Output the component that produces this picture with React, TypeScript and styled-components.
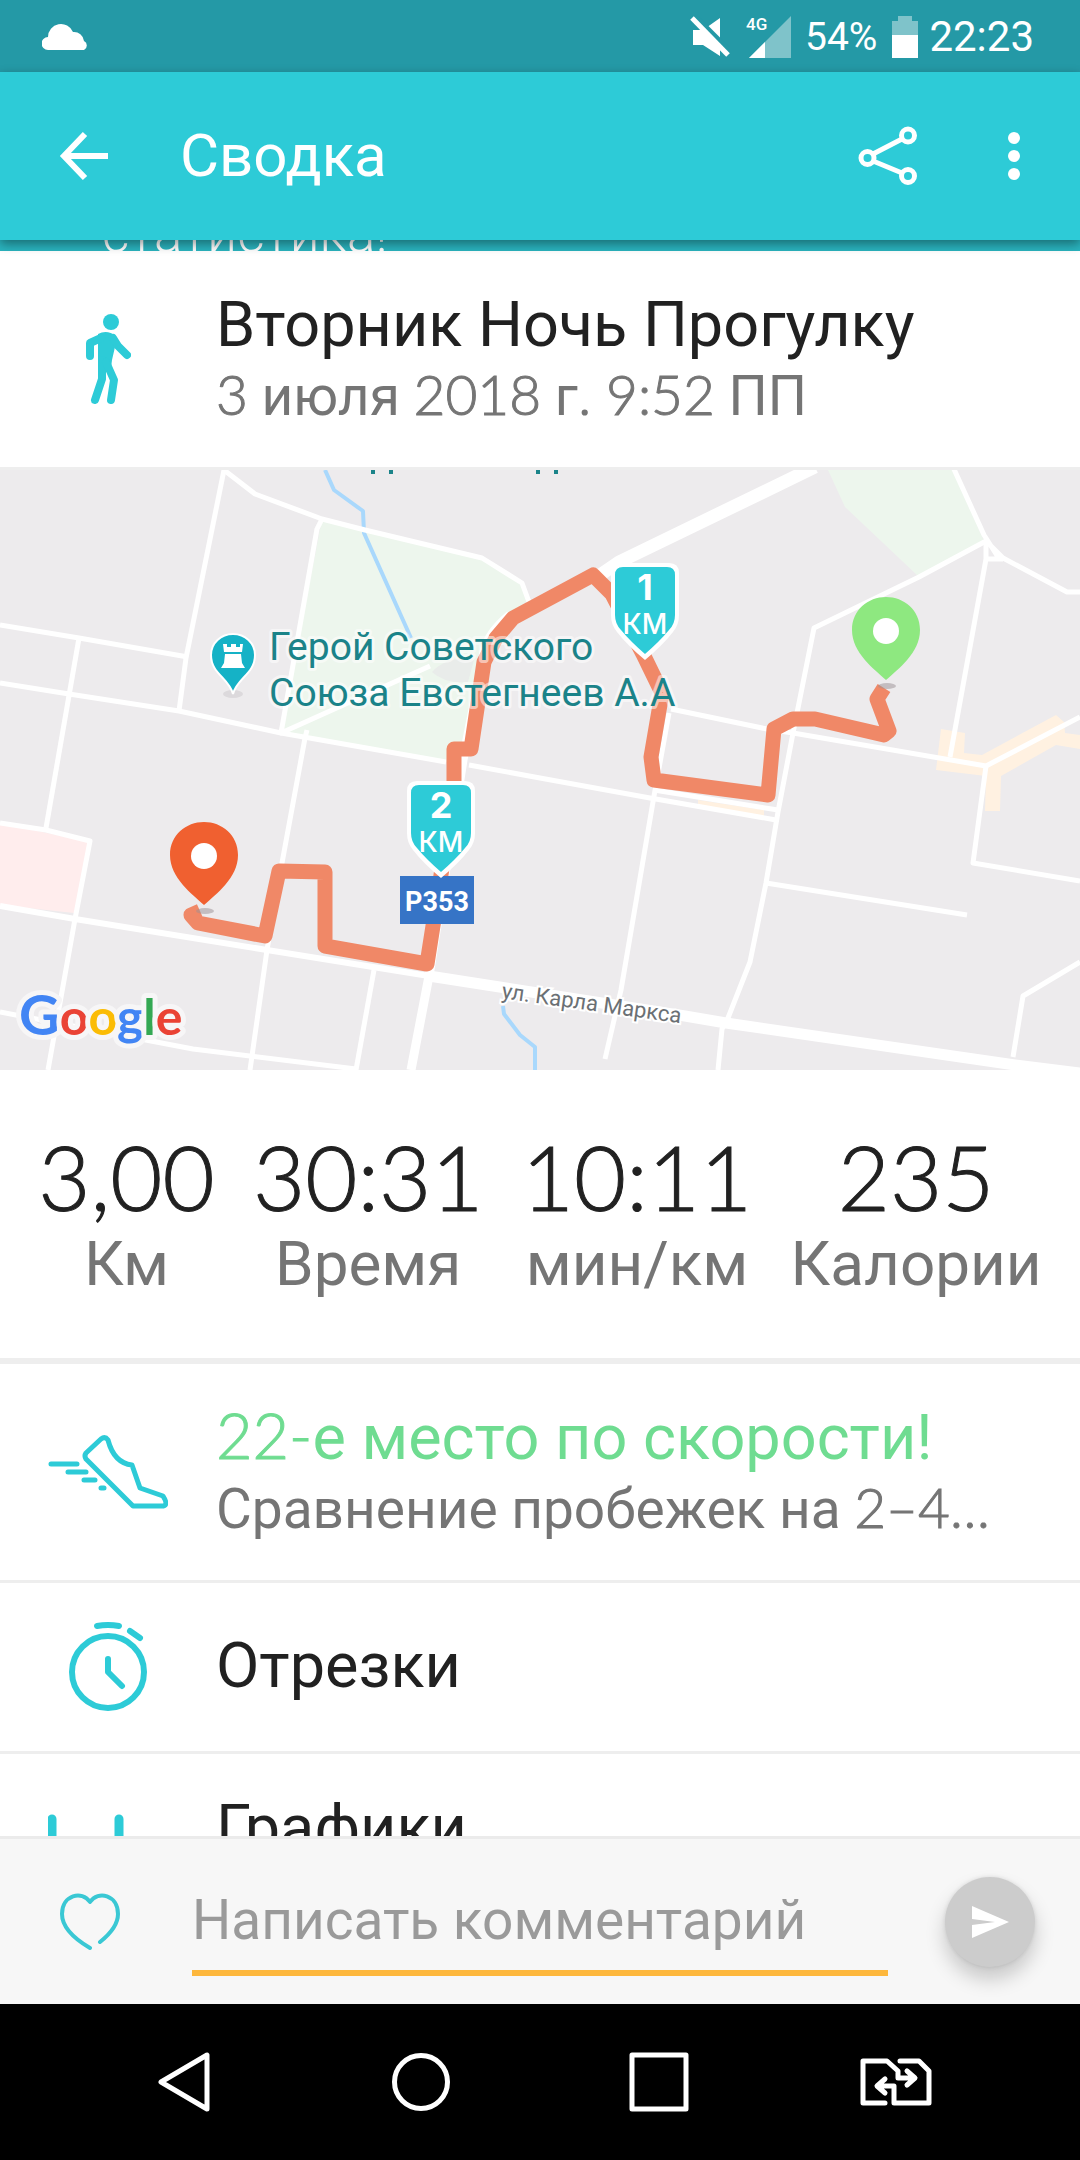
import React from "react";
import styled, { createGlobalStyle } from "styled-components";

const color = {
  statusBar: "#2499a6",
  primary: "#2dcbd7",
  banner: "#2ab4bf",
  ink: "#212121",
  muted: "#757575",
  hint: "#9a9a9a",
  line: "#eeeeee",
  success: "#6fdc91",
  accent: "#fdb73c",
  bar: "#f7f7f7",
};

const Global = createGlobalStyle`
  html, body, #root { height: 100%; }
  body { margin: 0; background: #fff; font-family: Roboto, "Noto Sans", sans-serif; color: ${color.ink}; }
  *, *::before, *::after { box-sizing: border-box; }
  button { appearance: none; border: 0; padding: 0; background: none; font: inherit; color: inherit; cursor: pointer; }
  h1, h2, p, dl, dt, dd, ul { margin: 0; padding: 0; font-weight: 400; }
  svg { display: block; }
`;

const Screen = styled.div`
  display: flex;
  flex-direction: column;
  height: 100vh;
  overflow: hidden;
`;

const StatusBar = styled.div`
  flex: none;
  display: flex;
  align-items: center;
  height: 72px;
  padding: 2px 46px 0 42px;
  background: ${color.statusBar};
  color: #fff;
`;

const StatusGroup = styled.div`
  display: flex;
  align-items: center;
  margin-left: auto;
`;

const StatusText = styled.span<{ $size: number }>`
  font-size: ${(p) => p.$size}px;
  line-height: 48px;
  white-space: nowrap;
`;

const StatusIcon = styled.span<{ $gap: number }>`
  margin-right: ${(p) => p.$gap}px;
`;

const Toolbar = styled.header`
  flex: none;
  position: relative;
  z-index: 1;
  display: flex;
  align-items: center;
  height: 168px;
  padding: 0 18px 0 48px;
  background: ${color.primary};
  color: #fff;
  box-shadow: 0 4px 10px rgba(0, 0, 0, 0.4);
`;

const ToolbarTitle = styled.h1`
  flex: 1;
  margin-left: 60px;
  font-size: 60px;
  line-height: 72px;
`;

const ToolbarActions = styled.div`
  display: flex;
  gap: 30px;
`;

const IconButton = styled.button<{ $width: number }>`
  display: grid;
  place-items: center;
  width: ${(p) => p.$width}px;
  height: 96px;
`;

const Content = styled.main`
  flex: 1;
  min-height: 0;
  overflow: hidden;
`;

const Banner = styled.div`
  display: flex;
  align-items: flex-end;
  height: 11px;
  padding-left: 102px;
  overflow: hidden;
  background: ${color.banner};
  color: #fff;
`;

const BannerText = styled.p`
  font-size: 53px;
  font-weight: 300;
  line-height: 34px;
`;

const Row = styled.section<{ $height: number }>`
  display: flex;
  align-items: center;
  min-height: ${(p) => p.$height}px;
`;

const RowButton = styled.button<{ $height: number }>`
  display: flex;
  align-items: center;
  width: 100%;
  min-height: ${(p) => p.$height}px;
  text-align: left;
  border-bottom: 3px solid ${color.line};
`;

const RowIcon = styled.span`
  flex: none;
  display: grid;
  place-items: center;
  width: 216px;
`;

const RowText = styled.span`
  display: block;
  flex: 1;
  min-width: 0;
  padding-bottom: 2px;
`;

const RowTitle = styled.span<{ $tone?: string }>`
  display: block;
  font-size: 63px;
  line-height: 76px;
  color: ${(p) => p.$tone ?? color.ink};
`;

const RowSubtitle = styled.span`
  display: block;
  font-size: 55px;
  line-height: 66px;
  color: ${color.muted};
  white-space: nowrap;
`;

const Digits = styled.span`
  font-family: Lato, Roboto, sans-serif;
  font-weight: 300;
  line-height: 1;
  -webkit-text-stroke: 1px currentColor;
`;

const MapFrame = styled.section`
  border-top: 3px solid ${color.line};
  overflow: hidden;
  svg { width: 100%; height: auto; }
`;

const Stats = styled.dl`
  display: flex;
  justify-content: space-evenly;
  height: 294px;
  padding-top: 54px;
  border-bottom: 6px solid ${color.line};
`;

const Stat = styled.div`
  display: flex;
  flex-direction: column-reverse;
  justify-content: flex-end;
  align-items: center;
`;

const StatValue = styled.dd`
  font-family: Lato, Roboto, sans-serif;
  font-size: 90px;
  font-weight: 300;
  line-height: 104px;
  -webkit-text-stroke: 1px currentColor;
`;

const StatLabel = styled.dt`
  font-size: 62px;
  line-height: 72px;
  color: ${color.muted};
`;

const CommentBar = styled.form`
  flex: none;
  display: flex;
  align-items: center;
  height: 168px;
  padding: 0 45px 0 42px;
  background: ${color.bar};
  border-top: 3px solid #ebebeb;
`;

const CommentInput = styled.input`
  flex: 1;
  min-width: 0;
  height: 109px;
  margin: 0 57px 0 54px;
  padding: 3px 0 0;
  border: 0;
  border-bottom: 6px solid ${color.accent};
  border-radius: 0;
  outline: 0;
  background: none;
  font: 400 55px/66px Roboto, sans-serif;
  color: ${color.ink};
  &::placeholder { color: ${color.hint}; opacity: 1; }
`;

const SendButton = styled.button`
  display: grid;
  place-items: center;
  width: 90px;
  height: 90px;
  border-radius: 50%;
  background: #cccccc;
  box-shadow: 0 12px 20px rgba(0, 0, 0, 0.2), 0 0 4px rgba(0, 0, 0, 0.1);
`;

const NavBar = styled.nav`
  flex: none;
  display: grid;
  grid-template-columns: repeat(4, 1fr);
  justify-items: center;
  align-items: center;
  height: 156px;
  padding: 0 65px;
  background: #000;
`;

const KmMarker = ({ x, y, n }: { x: number; y: number; n: string }) => (
  <g transform={`translate(${x} ${y})`} textAnchor="middle" fill="#fff">
    <path
      d="M-24 0H24Q34 0 34 10V52Q34 62 28 69Q18 82 0 97Q-18 82 -28 69Q-34 62 -34 52V10Q-34 0 -24 0Z"
    />
    <path
      d="M-22 4H22Q30 4 30 12V52Q30 61 24 67Q15 78 0 91Q-15 78 -24 67Q-30 61 -30 52V12Q-30 4 -22 4Z"
      fill={color.primary}
    />
    <text y="37" fontFamily="Inter, sans-serif" fontSize="36" fontWeight="700">{n}</text>
    <text y="71" fontFamily="Inter, sans-serif" fontSize="28" fontWeight="500">КМ</text>
  </g>
);

const PlacePin = ({ x, y, fill }: { x: number; y: number; fill: string }) => (
  <g transform={`translate(${x} ${y})`}>
    <ellipse cx="1" cy="6" rx="9" ry="3" fill="#9a8f93" opacity="0.5" />
    <path d="M0 0C-12-11-34-27-34-50C-34-70-18-83 0-83S34-70 34-50C34-27 12-11 0 0Z" fill={fill} />
    <circle cy="-49" r="13" fill="#fff" />
  </g>
);

const RouteMap = () => (
  <svg viewBox="0 470 1080 600" role="img" aria-label="Маршрут прогулки">
    <rect y="470" width="1080" height="600" fill="#edebed" />
    <g fill="#edf6ed">
      <path d="M322 519L365 531L482 558L522 583L529 600L496 622L479 658L461 762L446 762L281 733Z" />
      <path d="M828 470L845 507L919 577L984 541L953 470Z" />
    </g>
    <path d="M0 823L89 842L74 913L0 905Z" fill="#ffeded" />
    <path d="M432 672Q448 655 474 660L468 682Q445 684 432 672Z" fill="#e9ecea" />
    <g fill="#fff1e1">
      <path d="M941 729L965 733L964 753L982 755L1056 715L1064 722L1065 733L1080 735V749L1056 745L1001 776L1000 811H985L986 776L936 770Z" />
      <path d="M698 800L764 810V817L698 807Z" />
    </g>
    <g fill="none" stroke="#a9d8fc" strokeWidth="4" strokeLinejoin="round">
      <path d="M325 470L334 490L363 511L364 533L411 638" />
      <path d="M503 1006L504 1014L520 1035L535 1047V1070" />
    </g>
    <g fill="none" stroke="#fff" strokeWidth="5" strokeLinejoin="round">
      <path d="M224 470L186 658L179 711" />
      <path d="M224 470L255 494L322 519L365 530L482 558L522 583L529 602" />
      <path d="M322 519L317 529L281 733L430 666" />
      <path d="M0 625L79 638L188 657" />
      <path d="M79 638L46 828" />
      <path d="M0 683L69 694L179 711L281 733L446 762M469 765L540 778L650 798L776 820" />
      <path d="M307 730L305 738L282 863L267 950L250 1070" />
      <path d="M0 823L46 830L90 841L75 919L48 1070" />
      <path d="M374 970L356 1070" />
      <path d="M0 1012L151 1041L193 1049L356 1069" />
      <path d="M953 467L984 535L998 557M986 541L1003 558L1067 592H1080M986 559H1003" />
      <path d="M986 541L919 577L814 628L797 713L793 733L778 812L766 883L750 962L728 1018L722 1029L718 1070" />
      <path d="M986 541V559L950 757" />
      <path d="M671 709L767 729L793 733L986 766L1080 717" />
      <path d="M986 766L973 863L1080 881" />
      <path d="M766 883L967 915" />
      <path d="M669 713L654 796L621 990L605 1059" />
      <path d="M654 790L778 810" />
      <path d="M1080 962L1023 996L1013 1057" />
    </g>
    <g fill="none" stroke="#fff" strokeLinejoin="round">
      <path d="M0 906L75 919L267 950L429 976" strokeWidth="6" />
      <path d="M510 615Q485 635 483 658L463 760L429 976L411 1070" strokeWidth="9" />
      <path d="M429 976L685 1016L726 1023L1015 1065L1080 1073" strokeWidth="11" />
      <path d="M815 467L619 562L600 575" strokeWidth="13" />
    </g>
    <path
      d="M884 688L877 699L889 731L884 735L815 719H793L774 729L768 795L654 780L651 757L662 693L643 654L612 594L593 575L513 618L496 638L484 662L471 749H454V788L441 875L427 964L325 946V872L279 871L265 936L198 923L191 915L200 911"
      fill="none"
      stroke="#f08867"
      strokeWidth="15"
      strokeLinejoin="round"
    />
    <g fill="#1b8389">
      <rect x="371" y="470" width="4" height="4" />
      <rect x="389" y="470" width="4" height="4" />
      <rect x="536" y="470" width="4" height="4" />
      <rect x="554" y="470" width="4" height="4" />
    </g>
    <ellipse cx="233" cy="694" rx="10" ry="4" fill="#dcd9dc" />
    <path d="M233 694C229 678 211 674 211 655C211 643 221 634 233 634S255 643 255 655C255 674 237 678 233 694Z" fill="#15b2c6" stroke="#fff" strokeWidth="2" />
    <path d="M223 644h4v3h4v-3h5v3h4v-3h3l-1 8h-18ZM225 654h16l1 9 3 5h-24l3-5Z" fill="#fff" />
    <g fontFamily="Roboto, sans-serif" fontSize="39" fill="#1b8389" stroke="#fff" strokeOpacity="0.5" strokeWidth="6" paintOrder="stroke" strokeLinejoin="round">
      <text x="269" y="660">Герой Советского</text>
      <text x="269" y="706">Союза Евстегнеев А.А</text>
    </g>
    <text
      transform="translate(501 998) rotate(8)"
      fontFamily="Roboto, sans-serif"
      fontSize="22"
      fill="#6b7074"
      stroke="#fff"
      strokeWidth="4"
      paintOrder="stroke"
    >
      ул. Карла Маркса
    </text>
    <rect x="400" y="876" width="74" height="48" fill="#3674c6" />
    <text x="437" y="911" textAnchor="middle" fontFamily="Roboto, sans-serif" fontSize="27" fontWeight="700" fill="#fff">P353</text>
    <KmMarker x={645} y={563} n="1" />
    <KmMarker x={441} y={781} n="2" />
    <PlacePin x={886} y={680} fill="#8ee880" />
    <PlacePin x={204} y={905} fill="#f06030" />
    <text x="19" y="1035" fontFamily="Lato, sans-serif" fontSize="50" fontWeight="700" stroke="#f7f6f7" strokeWidth="10" paintOrder="stroke" strokeLinejoin="round">
      <tspan fill="#4285f4" fontSize="56">G</tspan>
      <tspan fill="#ea4335">o</tspan>
      <tspan fill="#fbbc05">o</tspan>
      <tspan fill="#4285f4">g</tspan>
      <tspan fill="#34a853">l</tspan>
      <tspan fill="#ea4335">e</tspan>
    </text>
  </svg>
);

const stats = [
  { value: "3,00", label: "Км" },
  { value: "30:31", label: "Время" },
  { value: "10:11", label: "мин/км" },
  { value: "235", label: "Калории" },
];

export default function App() {
  return (
    <Screen>
      <Global />
      <StatusBar>
        <svg width="50" height="28" viewBox="0 0 50 28" fill="#fff">
          <path d="M6 27a6 6 0 0 1 0-13A13 13 0 0 1 31 9a10 10 0 0 1 11 9a5 5 0 0 1 0 9Z" />
        </svg>
        <StatusGroup>
          <StatusIcon $gap={16}>
            <svg width="40" height="42" viewBox="0 0 40 42">
              <path d="M3 14H13L30 2V40L13 29H3Z" fill="#fff" />
              <path d="M5 0L42 37" stroke={color.statusBar} strokeWidth="5" />
              <path d="M2 2L38 39" stroke="#fff" strokeWidth="5" />
            </svg>
          </StatusIcon>
          <StatusIcon $gap={13}>
            <svg width="46" height="44" viewBox="0 0 46 44">
              <path d="M45 1V43H3Z" fill="#7fc3ca" />
              <path d="M19 27V43H3Z" fill="#fff" />
              <text x="0" y="15" fontFamily="Roboto, sans-serif" fontSize="17" fontWeight="500" fill="#fff">4G</text>
            </svg>
          </StatusIcon>
          <StatusText $size={39}>54%</StatusText>
          <svg width="52" height="44" viewBox="0 0 52 44">
            <path d="M15 6H21V1H35V6H41V43H15Z" fill="#7fc3ca" />
            <path d="M15 20H41V43H15Z" fill="#fff" />
          </svg>
          <StatusText $size={42}>22:23</StatusText>
        </StatusGroup>
      </StatusBar>
      <Toolbar>
        <IconButton $width={72} type="button" aria-label="Назад">
          <svg width="50" height="50" viewBox="0 0 50 50" fill="none" stroke="#fff" strokeWidth="6">
            <path d="M26 3L5 25L26 47M5 25H49" />
          </svg>
        </IconButton>
        <ToolbarTitle>Сводка</ToolbarTitle>
        <ToolbarActions>
          <IconButton $width={96} type="button" aria-label="Поделиться">
            <svg width="60" height="60" viewBox="0 0 60 60" fill="none" stroke="#fff" strokeWidth="5">
              <circle cx="9.500" cy="32" r="6.500" />
              <circle cx="50" cy="9.500" r="6.500" />
              <circle cx="50" cy="50" r="6.500" />
              <path d="M15 28L44 13M15 35L44 47" />
            </svg>
          </IconButton>
          <IconButton $width={96} type="button" aria-label="Ещё">
            <svg width="12" height="48" viewBox="0 0 12 48" fill="#fff">
              <circle cx="6" cy="6" r="6" />
              <circle cx="6" cy="24" r="6" />
              <circle cx="6" cy="42" r="6" />
            </svg>
          </IconButton>
        </ToolbarActions>
      </Toolbar>
      <Content>
        <Banner>
          <BannerText>статистика!</BannerText>
        </Banner>
        <Row $height={216}>
          <RowIcon>
            <svg width="46" height="92" viewBox="0 0 46 92" fill="none" stroke={color.primary} strokeWidth="8" strokeLinecap="round" strokeLinejoin="round">
              <circle cx="26" cy="9" r="8" fill={color.primary} stroke="none" />
              <path d="M13 21Q22 16 31 23L30 34L27 47L26 55H13V33Z" fill={color.primary} stroke="none" />
              <path d="M16 25L5 30V43" />
              <path d="M28 25L33 33L42 42" />
              <path d="M17 47V66L10 87" />
              <path d="M21 49L29 67L26 87" />
            </svg>
          </RowIcon>
          <RowText>
            <RowTitle>Вторник Ночь Прогулку</RowTitle>
            <RowSubtitle>
              <Digits>3</Digits> июля <Digits>2018</Digits> г. <Digits>9:52</Digits> ПП
            </RowSubtitle>
          </RowText>
        </Row>
        <MapFrame>
          <RouteMap />
        </MapFrame>
        <Stats>
          {stats.map((s) => (
            <Stat key={s.label}>
              <StatLabel>{s.label}</StatLabel>
              <StatValue>{s.value}</StatValue>
            </Stat>
          ))}
        </Stats>
        <RowButton $height={219} type="button">
          <RowIcon>
            <svg width="120" height="74" viewBox="0 0 120 74" fill="none" stroke={color.primary} strokeWidth="5" strokeLinecap="round" strokeLinejoin="round">
              <path d="M53 4Q57 1 60 5Q66 28 84 30L92 53L115 61Q122 72 112 71H85L38 24Q36 21 38 18Z" />
              <path d="M3 29H29M20 37H38M36 45H47M53 53H56" />
            </svg>
          </RowIcon>
          <RowText>
            <RowTitle $tone={color.success}>
              <Digits>22-</Digits>е место по скорости!
            </RowTitle>
            <RowSubtitle>
              Сравнение пробежек на <Digits>2–4…</Digits>
            </RowSubtitle>
          </RowText>
        </RowButton>
        <RowButton $height={171} type="button">
          <RowIcon>
            <svg width="78" height="90" viewBox="0 0 78 90" fill="none" stroke={color.primary} strokeWidth="6" strokeLinecap="round" strokeLinejoin="round">
              <circle cx="39" cy="50" r="36" />
              <path d="M39 37V50L53 64M28 4Q39 2 50 4M61 9L71 16" />
            </svg>
          </RowIcon>
          <RowText>
            <RowTitle>Отрезки</RowTitle>
          </RowText>
        </RowButton>
        <RowButton $height={153} type="button">
          <RowIcon>
            <svg width="120" height="60" viewBox="0 0 120 60" fill="none" stroke={color.primary} strokeWidth="9" strokeLinecap="round">
              <path d="M4 20V56M71 20V56" />
            </svg>
          </RowIcon>
          <RowText>
            <RowTitle>Графики</RowTitle>
          </RowText>
        </RowButton>
      </Content>
      <CommentBar onSubmit={(e) => e.preventDefault()}>
        <IconButton $width={96} type="button" aria-label="Нравится">
          <svg width="62" height="58" viewBox="0 0 62 58" fill="none" stroke="#3ac8d4" strokeWidth="4" strokeLinecap="round" strokeLinejoin="round">
            <path d="M31 55C14 45 3 33 3 21C3 2 23-3 31 9C39-3 59 2 59 21C59 32 51 41 41 49" />
          </svg>
        </IconButton>
        <CommentInput aria-label="Комментарий" placeholder="Написать комментарий" />
        <SendButton type="submit" aria-label="Отправить">
          <svg width="38" height="34" viewBox="0 0 38 34" fill="#fff">
            <path d="M1 1L38 17L1 33V20L24 17L1 14Z" />
          </svg>
        </SendButton>
      </CommentBar>
      <NavBar>
        <IconButton $width={120} type="button" aria-label="Назад (система)">
          <svg width="54" height="60" viewBox="0 0 54 60" fill="none" stroke="#fff" strokeWidth="5" strokeLinejoin="round">
            <path d="M50 3V57L4 30Z" />
          </svg>
        </IconButton>
        <IconButton $width={120} type="button" aria-label="Домой">
          <svg width="60" height="60" viewBox="0 0 60 60" fill="none" stroke="#fff" strokeWidth="5">
            <circle cx="30" cy="30" r="26.500" />
          </svg>
        </IconButton>
        <IconButton $width={120} type="button" aria-label="Недавние">
          <svg width="60" height="60" viewBox="0 0 60 60" fill="none" stroke="#fff" strokeWidth="5" strokeLinejoin="round">
            <rect x="3" y="3" width="54" height="54" />
          </svg>
        </IconButton>
        <IconButton $width={120} type="button" aria-label="Сменить SIM">
          <svg width="72" height="48" viewBox="0 0 72 48" fill="none" stroke="#fff" strokeWidth="5" strokeLinecap="round" strokeLinejoin="round">
            <path d="M25 45H3V3H27L38 13V20H53M47 13L55 20L47 27" />
            <path d="M40 3H59L69 13V45H34V28H19M25 21L17 28L25 35" />
          </svg>
        </IconButton>
      </NavBar>
    </Screen>
  );
}
